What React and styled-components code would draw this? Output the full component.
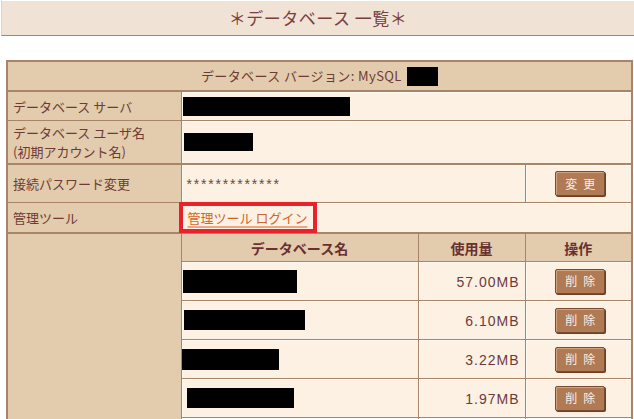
import styled, { createGlobalStyle } from 'styled-components';

const BORDER = '#a88468';
const TEXT = '#6e3b34';

const Global = createGlobalStyle`
  body {
    margin: 0;
    background: #ffffff;
    font-family: 'Noto Sans CJK JP', 'Noto Sans', sans-serif;
    color: ${TEXT};
  }
`;

const databases = [
  { w: 114, h: 23, dx: 1, size: '57.00MB' },
  { w: 121, h: 20, dx: 2, size: '6.10MB' },
  { w: 97, h: 21, dx: 0, size: '3.22MB' },
  { w: 107, h: 20, dx: 5, size: '1.97MB' },
];

const App = () => {
  return (<>
    <Global/>
    <TitleBar>＊データベース 一覧＊</TitleBar>
    <Table>
      <colgroup>
        <col style={{ width: 174 }}/>
        <col style={{ width: 237 }}/>
        <col style={{ width: 107 }}/>
        <col style={{ width: 107 }}/>
      </colgroup>
      <tbody>
        <tr>
          <HeadCell colSpan={4} $h={28} $thick>
            データベース バージョン: MySQL <Redacted $w={31} $h={19} $dx={2} $inline/>
          </HeadCell>
        </tr>
        <tr>
          <Label $h={28}>データベース サーバ</Label>
          <Value colSpan={3}><Redacted $w={167} $h={19} $dx={1}/></Value>
        </tr>
        <tr>
          <Label $h={42} $thick>データベース ユーザ名<br/>(初期アカウント名)</Label>
          <Value colSpan={3} $thick><Redacted $w={69} $h={18} $dx={2}/></Value>
        </tr>
        <tr>
          <Label $h={37}>接続パスワード変更</Label>
          <Value colSpan={2}><Mask>*************</Mask></Value>
          <Value $center><Button>変更</Button></Value>
        </tr>
        <tr>
          <Label $h={29} $thick>管理ツール</Label>
          <Value colSpan={3} $thick><AdminLink href='#'>管理ツール ログイン</AdminLink></Value>
        </tr>
        <tr>
          <Label rowSpan={databases.length + 2}/>
          <SubHead $h={27}>データベース名</SubHead>
          <SubHead>使用量</SubHead>
          <SubHead>操作</SubHead>
        </tr>
        {databases.map((db, i) => (
          <tr key={i}>
            <Value $h={38}><Redacted $w={db.w} $h={db.h} $dx={db.dx}/></Value>
            <Value $right><Usage>{db.size}</Usage></Value>
            <Value $center><Button>削除</Button></Value>
          </tr>
        ))}
        <tr>
          <Value $h={38}/>
          <Value/>
          <Value/>
        </tr>
      </tbody>
    </Table>
  </>);
};

export default App;

const TitleBar = styled.div`
  background: #f0e3d5;
  border-top: 1px solid #ffffff;
  border-left: 1px solid #e2d2c2;
  border-bottom: 1px solid ${BORDER};
  color: #7b3f3f;
  font-size: 17px;
  height: 34px;
  letter-spacing: 0.5px;
  line-height: 34px;
  margin: 0 0 24px 1px;
  text-align: center;
`;

const Table = styled.table`
  border: 2px solid ${BORDER};
  border-collapse: collapse;
  font-size: 13px;
  margin-left: 6px;
  table-layout: fixed;
  width: 625px;
`;

const Cell = styled.td`
  border: 1px solid ${BORDER};
  border-bottom-width: ${({ $thick }) => $thick ? '2px' : '1px'};
  height: ${({ $h }) => $h ? `${$h}px` : 'auto'};
  padding: 0;
  vertical-align: middle;
`;

const HeadCell = styled(Cell)`
  background: #e3cbad;
  letter-spacing: 0.4px;
  text-align: center;
`;

const Label = styled(Cell)`
  background: #e3cbad;
  line-height: 19px;
  padding: 0 5px;
`;

const Value = styled(Cell)`
  background: #fdf1e4;
  box-shadow: inset 1px 1px 0 #fffaf4;
  padding: ${({ $right }) => $right ? '0 5px 0 0' : '0'};
  text-align: ${({ $right, $center }) => $right ? 'right' : $center ? 'center' : 'left'};
`;

const SubHead = styled(Cell)`
  background: #e3cbad;
  color: #6a3030;
  font-size: 14px;
  font-weight: 700;
  text-align: center;
`;

const Redacted = styled.span`
  background: #000000;
  display: ${({ $inline }) => $inline ? 'inline-block' : 'block'};
  height: ${({ $h }) => $h}px;
  margin-left: ${({ $dx }) => $dx || 0}px;
  vertical-align: middle;
  width: ${({ $w }) => $w}px;
`;

const Mask = styled.span`
  color: #6b4a3a;
  font-family: 'Liberation Sans', sans-serif;
  font-size: 14px;
  letter-spacing: 1.8px;
  padding-left: 5px;
`;

const AdminLink = styled.a`
  color: #d2662a;
  display: inline-block;
  line-height: 19px;
  margin-left: 1px;
  outline: 4px solid #e8212a;
  padding: 2px 6px 2px 5px;
  text-decoration: underline;
  text-decoration-color: #e8a888;
  text-decoration-thickness: 2px;
  text-underline-offset: 3px;
`;

const Usage = styled.span`
  color: #6b3a3a;
  font-family: 'Liberation Sans', sans-serif;
  font-size: 14px;
  letter-spacing: 1px;
`;

const Button = styled.button`
  background: #b07a55;
  border: 1px solid #7b4a30;
  border-radius: 2px;
  box-shadow: inset 1px 1px 0 #d4a27c, 1px 1px 0 #6a4028;
  color: #f8efe6;
  cursor: pointer;
  font-family: 'Noto Sans CJK JP', sans-serif;
  font-size: 12px;
  height: 25px;
  letter-spacing: 6px;
  line-height: 1;
  margin-left: 4px;
  padding: 0 0 0 6px;
  width: 50px;
`;
